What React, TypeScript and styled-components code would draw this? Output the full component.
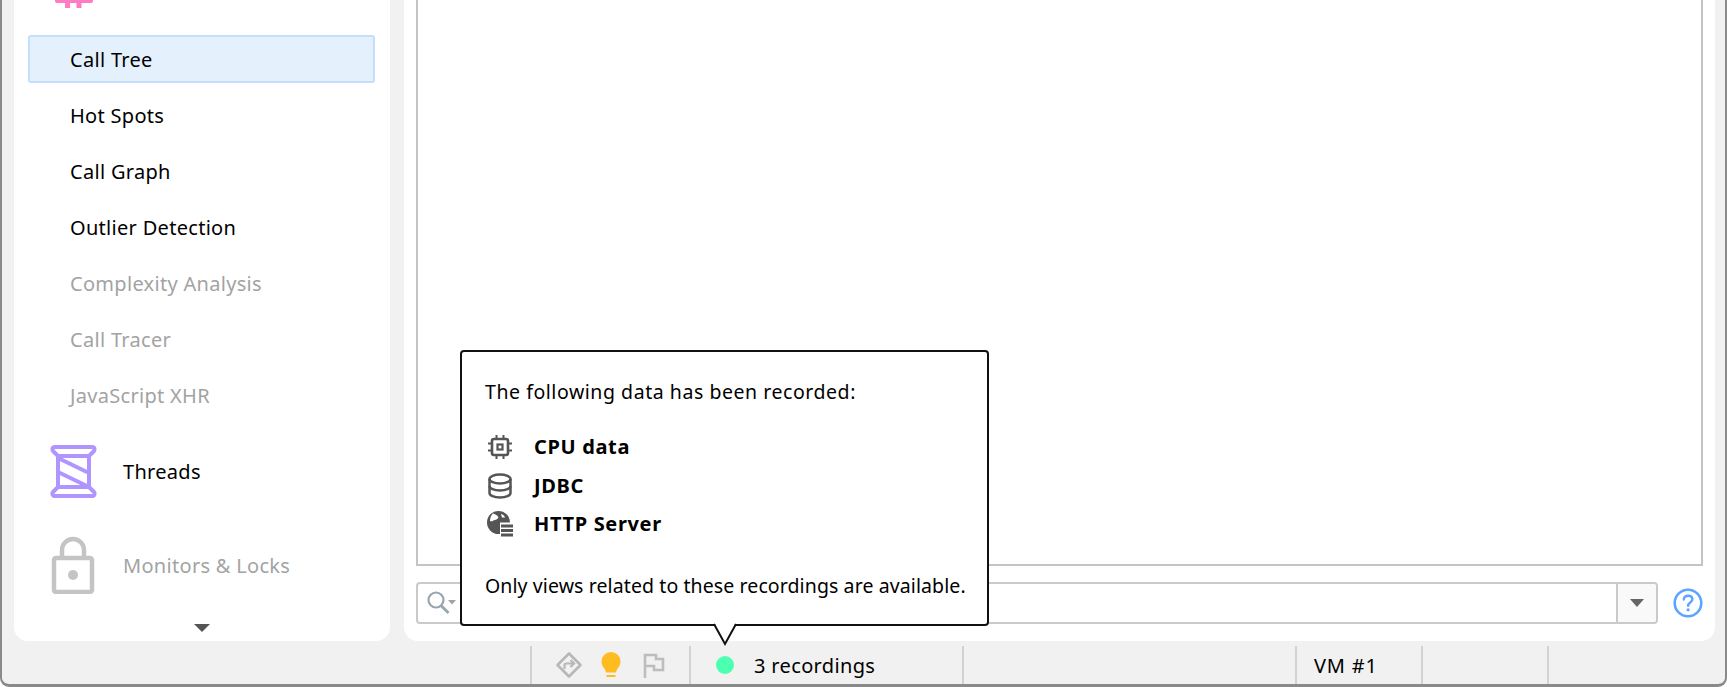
import React from "react";
import styled, { createGlobalStyle } from "styled-components";

const Global = createGlobalStyle`
  html, body { margin: 0; padding: 0; background: #fff; }
  body { font-family: "Noto Sans", "Open Sans", sans-serif; font-size: 18px; color: #000; overflow: hidden; }
`;

const Frame = styled.div`
  position: relative;
  box-sizing: border-box;
  width: 1727px;
  height: 687px;
  background: #f1f1f1;
  border-left: 2px solid #8a8a8a;
  border-right: 2px solid #8a8a8a;
  border-bottom: 3px solid #8a8a8a;
  border-radius: 0 0 9px 9px;
  display: flex;
  flex-direction: column;
`;

const Workspace = styled.div`
  display: flex;
  gap: 14px;
  height: 641px;
  padding: 0 10px 0 12px;
  flex: none;
  box-sizing: border-box;
`;

const Sidebar = styled.aside`
  width: 376px;
  flex: none;
  background: #fff;
  border-radius: 0 0 14px 14px;
  overflow: hidden;
  display: flex;
  flex-direction: column;
  justify-content: flex-end;
`;

const ClippedIcon = styled.div`
  flex: none;
  padding: 0 0 27px 41px;
  line-height: 0;
`;

const NavList = styled.nav`
  display: flex;
  flex-direction: column;
  gap: 8px;
  margin: 0 15px 5px 14px;
`;

const NavItem = styled.div<{ $selected?: boolean; $disabled?: boolean }>`
  box-sizing: border-box;
  height: 48px;
  display: flex;
  align-items: center;
  padding-left: 40px;
  border: 2px solid ${(p) => (p.$selected ? "#c2dffc" : "transparent")};
  border-radius: 3px;
  background: ${(p) => (p.$selected ? "#e5f0fd" : "transparent")};
  color: ${(p) => (p.$disabled ? "#a3a3a3" : "#000")};
  font-size: 20px;
  letter-spacing: 0.3px;
`;

const SectionRow = styled.div<{ $disabled?: boolean }>`
  height: 94px;
  flex: none;
  display: flex;
  align-items: center;
  gap: 25px;
  padding-left: 35px;
  color: ${(p) => (p.$disabled ? "#a3a3a3" : "#000")};
  font-size: 20px;
  letter-spacing: 0.3px;
`;

const SectionIcon = styled.svg`
  width: 49px;
  height: 58px;
  flex: none;
`;

const ScrollFoot = styled.div`
  height: 29px;
  flex: none;
  display: flex;
  justify-content: center;
  padding-top: 12px;
  box-sizing: border-box;
  line-height: 0;
`;

const Triangle = styled.span<{ $w: number; $h: number; $c: string }>`
  display: block;
  width: 0;
  height: 0;
  border-left: ${(p) => p.$w / 2}px solid transparent;
  border-right: ${(p) => p.$w / 2}px solid transparent;
  border-top: ${(p) => p.$h}px solid ${(p) => p.$c};
`;

const MainPanel = styled.main`
  flex: 1;
  background: #fff;
  border-radius: 0 0 14px 14px;
  padding: 0 12px 17px 12px;
  display: flex;
  flex-direction: column;
  gap: 16px;
  box-sizing: border-box;
  min-width: 0;
`;

const Canvas = styled.div`
  flex: 1;
  border: 2px solid #c4c4c4;
  border-top: none;
`;

const SearchRow = styled.div`
  height: 42px;
  flex: none;
  display: flex;
  align-items: center;
  gap: 15px;
`;

const SearchField = styled.div`
  flex: 1;
  height: 42px;
  box-sizing: border-box;
  border: 2px solid #cacaca;
  border-radius: 4px;
  display: flex;
  align-items: stretch;
  background: #fff;
`;

const SearchInput = styled.div`
  flex: 1;
  display: flex;
  align-items: center;
  padding-left: 9px;
`;

const DropButton = styled.div`
  width: 38px;
  flex: none;
  border-left: 2px solid #cacaca;
  background: #f9f9f9;
  display: flex;
  align-items: center;
  justify-content: center;
  border-radius: 0 3px 3px 0;
`;

const StatusBar = styled.footer`
  flex: 1;
  display: grid;
  grid-template-columns: 528px 159px 273px 333px 126px 126px 1fr;
  padding-top: 5px;
  box-sizing: border-box;
  min-height: 0;
`;

const StatusCell = styled.div<{ $first?: boolean }>`
  display: flex;
  align-items: center;
  box-sizing: border-box;
  border-left: ${(p) => (p.$first ? "none" : "2px solid #d2d2d2")};
  font-size: 20px;
  letter-spacing: 0.35px;
`;

const ToolCell = styled(StatusCell)`
  gap: 18px;
  padding-left: 23px;
`;

const RecordCell = styled(StatusCell)`
  padding-left: 25px;
  gap: 20px;
`;

const VmCell = styled(StatusCell)`
  padding-left: 17px;
  letter-spacing: 0.8px;
`;

const Dot = styled.span`
  width: 18px;
  height: 18px;
  border-radius: 50%;
  background: #4dffb0;
  flex: none;
`;

const Popup = styled.div`
  position: absolute;
  left: 458px;
  top: 350px;
  width: 529px;
  height: 276px;
  box-sizing: border-box;
  background: #fff;
  border: 2px solid #111;
  border-radius: 4px;
  padding: 26px 0 0 23px;
  font-size: 19.5px;
  letter-spacing: 0.1px;
  line-height: 28px;
`;

const PopupLine = styled.div<{ $track?: number }>`
  white-space: nowrap;
  letter-spacing: ${(p) => p.$track ?? 0.1}px;
`;

const RecordList = styled.ul`
  list-style: none;
  margin: 27px 0 34px;
  padding: 0;
  display: flex;
  flex-direction: column;
  gap: 10.5px;
`;

const RecordItem = styled.li`
  display: flex;
  align-items: center;
  gap: 21px;
  padding-left: 2px;
  font-size: 20px;
  font-weight: 700;
  letter-spacing: 0.65px;
`;

const RecordIcon = styled.svg`
  width: 26px;
  height: 26px;
  flex: none;
`;

const PopupTail = styled.svg`
  position: absolute;
  left: 251px;
  bottom: -23px;
  width: 24px;
  height: 23px;
  overflow: visible;
`;

const ToolIcon = styled.svg`
  flex: none;
`;

const FlagIcon = styled(ToolIcon)`
  margin-left: 4px;
`;

export default function App() {
  return (
    <>
      <Global />
      <Frame>
        <Workspace>
          <Sidebar>
            <ClippedIcon>
              <svg width="38" height="8" viewBox="0 0 38 8">
                <path d="M0 0h38v1a2 2 0 0 1-2 2H2a2 2 0 0 1-2-2z" fill="#ff7cc5" />
                <rect x="10" y="0" width="5" height="8" fill="#ff7cc5" />
                <rect x="21.500" y="0" width="5" height="8" fill="#ff7cc5" />
              </svg>
            </ClippedIcon>
            <NavList>
              <NavItem $selected>Call Tree</NavItem>
              <NavItem>Hot Spots</NavItem>
              <NavItem>Call Graph</NavItem>
              <NavItem>Outlier Detection</NavItem>
              <NavItem $disabled>Complexity Analysis</NavItem>
              <NavItem $disabled>Call Tracer</NavItem>
              <NavItem $disabled>JavaScript XHR</NavItem>
            </NavList>
            <SectionRow>
              <SectionIcon viewBox="0 0 49 58" fill="none" stroke="#b095ff" strokeWidth="4" strokeLinejoin="round" strokeLinecap="round">
                <path d="M6 5h37c3 0 3 3 2 4l-5 5H9L4 9c-1-1-1-4 2-4z" />
                <path d="M6 54h37c3 0 3-3 2-4l-5-5H9l-5 5c-1 1-1 4 2 4z" />
                <path d="M9 14v31M40 14v31" />
                <path d="M9 16l31 15M9 30l31 15" />
              </SectionIcon>
              Threads
            </SectionRow>
            <SectionRow $disabled>
              <SectionIcon viewBox="0 0 49 58" fill="none" stroke="#c4c4c4" strokeWidth="4.500" strokeLinejoin="round">
                <rect x="5" y="22" width="38" height="34" rx="2" />
                <path d="M13 22v-8a11 11 0 0 1 22 0v8" />
                <circle cx="24" cy="39" r="5" fill="#c4c4c4" stroke="none" />
              </SectionIcon>
              Monitors &amp; Locks
            </SectionRow>
            <ScrollFoot>
              <Triangle $w={16} $h={8} $c="#555" />
            </ScrollFoot>
          </Sidebar>
          <MainPanel>
            <Canvas />
            <SearchRow>
              <SearchField>
                <SearchInput>
                  <svg width="30" height="26" viewBox="0 0 30 26" fill="none">
                    <circle cx="9" cy="10" r="7.500" stroke="#9aa5ad" strokeWidth="2.200" />
                    <path d="M14 15.500l7.500 7.500" stroke="#9aa5ad" strokeWidth="2.800" />
                    <path d="M21 10h8l-4 4.500z" fill="#9aa5ad" />
                  </svg>
                </SearchInput>
                <DropButton>
                  <Triangle $w={15} $h={8} $c="#666" />
                </DropButton>
              </SearchField>
              <svg width="30" height="30" viewBox="0 0 30 30" fill="none">
                <circle cx="15" cy="15" r="13.300" stroke="#5ca5ff" strokeWidth="2.600" />
                <path d="M10.800 11.500c.2-2.500 2-3.800 4.400-3.800 2.500 0 4.200 1.500 4.200 3.500 0 3.300-4.300 3.300-4.300 6.600" stroke="#5ca5ff" strokeWidth="2.400" strokeLinecap="round" />
                <circle cx="15.100" cy="21.800" r="1.600" fill="#5ca5ff" />
              </svg>
            </SearchRow>
          </MainPanel>
        </Workspace>
        <StatusBar>
          <StatusCell $first />
          <ToolCell>
            <ToolIcon width="28" height="28" viewBox="0 0 28 28" fill="none">
              <path d="M14 2.500L25.500 14 14 25.500 2.500 14z" stroke="#b8b8b8" strokeWidth="2.600" strokeLinejoin="round" />
              <path d="M9.500 18v-3.500a2 2 0 0 1 2-2h7M15.500 9l3.600 3.500-3.600 3.500" stroke="#b8b8b8" strokeWidth="2.200" />
            </ToolIcon>
            <ToolIcon width="20" height="26" viewBox="0 0 20 26" fill="none">
              <path d="M10 0a9.500 9.500 0 0 1 9.500 9.500c0 5-3.500 6.500-4.500 11H5c-1-4.500-4.500-6-4.500-11A9.500 9.500 0 0 1 10 0z" fill="#ffbc21" />
              <rect x="5.500" y="23" width="9" height="2" fill="#ffbc21" />
            </ToolIcon>
            <FlagIcon width="22" height="26" viewBox="0 0 22 26" fill="none">
              <path d="M2 26V3h11v4h7v11H11v-4H2" stroke="#bdbdbd" strokeWidth="2.600" />
            </FlagIcon>
          </ToolCell>
          <RecordCell>
            <Dot />
            3 recordings
          </RecordCell>
          <StatusCell />
          <VmCell>VM #1</VmCell>
          <StatusCell />
          <StatusCell />
        </StatusBar>
        <Popup>
          <PopupLine $track={0.55}>The following data has been recorded:</PopupLine>
          <RecordList>
            <RecordItem>
              <RecordIcon viewBox="0 0 26 26" fill="none" stroke="#555" strokeWidth="2.600">
                <rect x="5" y="5" width="16" height="16" rx="2" />
                <rect x="10.500" y="10.500" width="5" height="5" strokeWidth="2.200" />
                <path d="M9.500 1v4M16.500 1v4M9.500 21v4M16.500 21v4M1 9.500h4M1 16.500h4M21 9.500h4M21 16.500h4" strokeWidth="2" />
              </RecordIcon>
              CPU data
            </RecordItem>
            <RecordItem>
              <RecordIcon viewBox="0 0 26 26" fill="none" stroke="#555" strokeWidth="2.500">
                <ellipse cx="13" cy="6" rx="10.500" ry="4.500" />
                <path d="M2.500 6v14c0 2.500 4.500 4.500 10.500 4.500s10.500-2 10.500-4.500V6" />
                <path d="M2.500 13c0 2.500 4.500 4.500 10.500 4.500s10.500-2 10.500-4.500" />
              </RecordIcon>
              JDBC
            </RecordItem>
            <RecordItem>
              <RecordIcon viewBox="0 0 26 26" fill="none">
                <path d="M11.500 0a11.500 11.500 0 0 1 11.500 11.500H13V23h-1.500a11.500 11.500 0 0 1 0-23z" fill="#555" />
                <path d="M6 2.500c2 .5 4 1.500 5 3s-1 3-3 3.500-3 2-5 1c0-3 1-6 3-7.500zM14 3c2 .5 3.500 1.500 4 3.500h-3z" fill="#fff" />
                <path d="M14 15h12M14 19.500h12M14 24h12" stroke="#555" strokeWidth="2.800" />
              </RecordIcon>
              HTTP Server
            </RecordItem>
          </RecordList>
          <PopupLine>Only views related to these recordings are available.</PopupLine>
          <PopupTail viewBox="0 0 24 23">
            <path d="M1 -2L12 20 23 -2z" fill="#fff" />
            <path d="M1 0L12 20 23 0" fill="none" stroke="#111" strokeWidth="2" />
          </PopupTail>
        </Popup>
      </Frame>
    </>
  );
}
